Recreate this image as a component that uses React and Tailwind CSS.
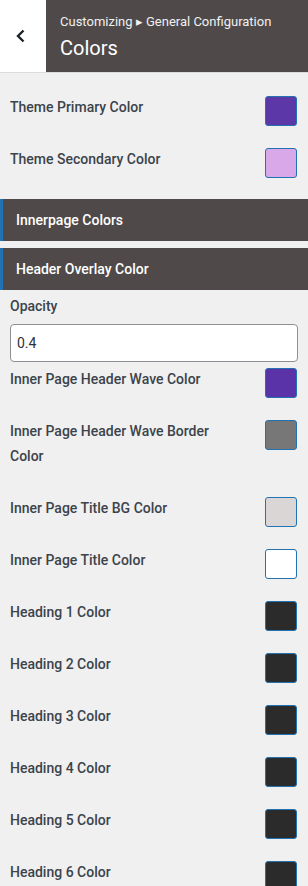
import React from "react";

function Row({ label, color, wide }) {
  return (
    <div className="flex items-start justify-between pl-[10px] pr-[11px] mb-[27px]">
      <div className={"leading-[25px] text-[14px] font-medium text-[#3c434a] " + (wide ? "w-[215px]" : "")}>{label}</div>
      <div className="w-[32px] h-[30px] mt-[1px] -mb-[6px] rounded-[3px] border border-[#2271b1] shrink-0" style={{ backgroundColor: color }} />
    </div>
  );
}

function Bar({ children, className = "" }) {
  return (
    <div className={"h-[42px] bg-[#4f4a49] border-l-[3px] border-[#2271b1] flex items-center pl-[13px] text-white text-[14px] font-medium " + className}>
      {children}
    </div>
  );
}

export default function App() {
  const headings = [1, 2, 3, 4, 5, 6];
  return (
    <div className="w-[308px] h-[886px] overflow-hidden bg-[#f0f0f1] font-['Roboto',sans-serif]">
      <div className="flex h-[73px] border-b border-[#dcdcde]">
        <div className="w-[46px] bg-white flex items-center justify-center">
          <svg width="12" height="14" viewBox="0 0 12 14" className="ml-[-4px]">
            <polyline points="8.5,1.5 3,7 8.5,12.5" fill="none" stroke="#1d2327" strokeWidth="2.4" />
          </svg>
        </div>
        <div className="flex-1 bg-[#4f4a49] pl-[14px] pt-[13px]">
          <div className="text-[13px] leading-[18px] text-[#f0f0f1]">Customizing ▸ General Configuration</div>
          <div className="text-[20px] leading-[28px] text-white mt-[3px]">Colors</div>
        </div>
      </div>
      <div className="pt-[22px]">
        <Row label="Theme Primary Color" color="#5b37a8" />
        <Row label="Theme Secondary Color" color="#d8a8e8" />
      </div>
      <Bar className="mt-[2px]">Innerpage Colors</Bar>
      <Bar className="mt-[7px]">Header Overlay Color</Bar>
      <div className="px-[10px] pt-[4px]">
        <div className="leading-[25px] text-[14px] font-medium text-[#3c434a]">Opacity</div>
        <div className="mt-[5px] h-[38px] bg-white border border-[#8c8f94] rounded-[4px] flex items-center pl-[6px] text-[14px] text-[#2c3338]">0.4</div>
      </div>
      <div className="pt-[5px]">
        <Row label="Inner Page Header Wave Color" color="#5a33a9" />
        <Row label="Inner Page Header Wave Border Color" color="#777777" wide />
        <Row label="Inner Page Title BG Color" color="#dad6d6" />
        <Row label="Inner Page Title Color" color="#ffffff" />
        {headings.map((h) => (
          <Row key={h} label={`Heading ${h} Color`} color="#2b2b2b" />
        ))}
      </div>
    </div>
  );
}
